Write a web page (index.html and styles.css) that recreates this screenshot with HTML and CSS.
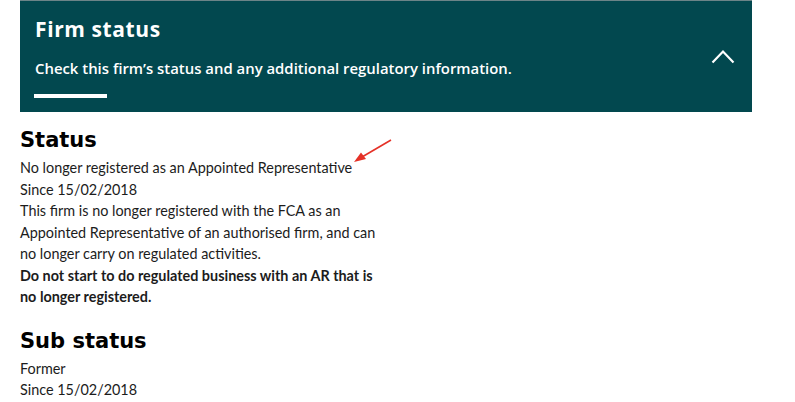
FILE: index.html
```html
<!DOCTYPE html>
<html lang="en">
<head>
  <meta charset="UTF-8">
  <meta name="viewport" content="width=device-width, initial-scale=1.0">
  <title>Firm status</title>
  <link rel="stylesheet" href="styles.css">
</head>
<body>
  <div class="page">
    <div class="panel">
      <div class="panel-text">
        <h1 class="panel-title">Firm status</h1>
        <p class="panel-sub">Check this firm’s status and any additional regulatory information.</p>
        <span class="panel-bar"></span>
      </div>
      <button class="toggle" aria-label="Collapse">
        <svg width="24" height="15" viewBox="0 0 24 15">
          <polyline points="1.5,13.5 12,2.5 22.5,13.5" fill="none" stroke="#fff" stroke-width="2.2"/>
        </svg>
      </button>
    </div>

    <div class="section">
      <h2>Status</h2>
      <p class="line">No longer registered as an Appointed Representative<svg class="arrow" width="40" height="26" viewBox="0 0 40 26"><line x1="38" y1="1" x2="9" y2="18" stroke="#e53127" stroke-width="1.6"/><polygon points="1,23 8,13.5 13,20" fill="#e53127"/></svg></p>
      <p class="line">Since 15/02/2018</p>
      <p class="line">This firm is no longer registered with the FCA as an Appointed Representative of an authorised firm, and can no longer carry on regulated activities.</p>
      <p class="line strong">Do not start to do regulated business with an AR that is no longer registered.</p>
    </div>

    <div class="section">
      <h2>Sub status</h2>
      <p class="line">Former</p>
      <p class="line">Since 15/02/2018</p>
    </div>
  </div>
</body>
</html>
```

FILE: styles.css
```css
body {
  margin: 0;
  background: #fff;
  font-family: Lato, "Open Sans", sans-serif;
  color: #1c1c1c;
}
.page {
  padding: 0 20px;
}
.panel {
  width: 732px;
  height: 112px;
  box-sizing: border-box;
  background: #02484f;
  border-top: 1px solid #6c8488;
  display: flex;
  justify-content: space-between;
  padding: 14px 17px 0 14px;
}
.panel-text {
  display: flex;
  flex-direction: column;
}
.panel-title {
  margin: 0 0 0 1px;
  font-family: "Open Sans", sans-serif;
  font-size: 21px;
  font-weight: 700;
  letter-spacing: 0.6px;
  line-height: 28px;
  color: #fff;
}
.panel-sub {
  margin: 15px 0 0 1px;
  font-family: "Open Sans", sans-serif;
  font-size: 14.9px;
  font-weight: 600;
  line-height: 20px;
  color: #fff;
}
.panel-bar {
  display: block;
  width: 73px;
  height: 4px;
  margin-top: 16px;
  background: #fff;
}
.toggle {
  background: none;
  border: none;
  padding: 0;
  margin-top: 34px;
  height: 15px;
  cursor: pointer;
}
.toggle svg {
  display: block;
}
.section {
  width: 358px;
}
h2 {
  margin: 14px 0 3px;
  font-family: "DejaVu Sans", Verdana, sans-serif;
  font-size: 21px;
  font-weight: 700;
  line-height: 28px;
  color: #000;
}
.section + .section h2 {
  margin-top: 19px;
}
.line {
  margin: 0;
  font-size: 14.4px;
  line-height: 21.5px;
}
.strong {
  font-weight: 700;
}
.arrow {
  position: absolute;
  left: 353px;
  top: 139px;
}
```
